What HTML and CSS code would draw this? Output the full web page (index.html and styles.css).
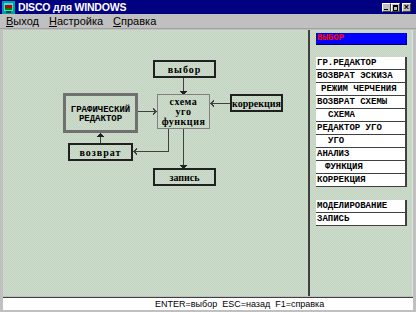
FILE: index.html
```html
<!DOCTYPE html>
<html lang="ru">
  <head>
    <meta charset="UTF-8" />
    <title>DISCO для WINDOWS</title>
    <link rel="stylesheet" href="styles.css">
  </head>
  <body>
    <div class="window">
      <div class="titlebar">
        <svg class="app-icon" viewBox="0 0 13 13" shape-rendering="crispEdges">
          <rect x="0" y="0" width="13" height="13" fill="#00a0a0" />
          <rect x="2" y="2" width="9" height="8" fill="#40e0e0" />
          <rect x="3" y="4" width="7" height="3" fill="#c00000" />
          <rect x="3" y="7" width="7" height="2" fill="#008000" />
          <rect x="4" y="10" width="5" height="2" fill="#004040" />
        </svg>
        <span class="title">DISCO для WINDOWS</span>
        <div class="controls">
          <span class="ctl ctl-min"></span>
          <span class="ctl ctl-max"></span>
          <span class="ctl ctl-close">×</span>
        </div>
      </div>

      <div class="menubar">
        <span class="menu-item"><u>В</u>ыход</span>
        <span class="menu-item"><u>Н</u>астройка</span>
        <span class="menu-item"><u>С</u>правка</span>
      </div>

      <div class="main">
        <div class="canvas">
          <svg class="links" width="305" height="267" shape-rendering="crispEdges">
            <g stroke="#404040" fill="none" stroke-width="1">
              <path d="M180.5 48 V62" />
              <path d="M135 81.5 H153" />
              <path d="M150 78.5 L153 81.5 L150 84.5" />
              <path d="M227 73.5 H208" />
              <path d="M211 70.5 L208 73.5 L211 76.5" />
              <path d="M180.5 99 V136" />
              <path d="M165.5 99 V121.5 H131" />
              <path d="M134 118.5 L131 121.5 L134 124.5" />
              <path d="M97.5 113 V105" />
            </g>
            <g fill="#202020">
              <path d="M177 61 H184 L180.5 65 Z" />
              <path d="M177 135 H184 L180.5 139 Z" />
              <path d="M94 107 H101 L97.5 103 Z" />
            </g>
          </svg>

          <div class="node node-dark node-select">выбор</div>
          <div class="node node-thin node-scheme">схема<br>уго<br>функция</div>
          <div class="node node-dark node-fix">коррекция</div>
          <div class="node node-dark node-save">запись</div>
          <div class="node node-grey node-editor">ГРАФИЧЕСКИЙ<br>РЕДАКТОР</div>
          <div class="node node-dark node-back">возврат</div>
        </div>

        <div class="sidebar">
          <div class="choice">ВЫБОР</div>
          <ul class="actions">
            <li>ГР.РЕДАКТОР</li>
            <li>ВОЗВРАТ ЭСКИЗА</li>
            <li class="indent-1">РЕЖИМ ЧЕРЧЕНИЯ</li>
            <li>ВОЗВРАТ СХЕМЫ</li>
            <li class="indent-3">СХЕМА</li>
            <li>РЕДАКТОР УГО</li>
            <li class="indent-3">УГО</li>
            <li>АНАЛИЗ</li>
            <li class="indent-2">ФУНКЦИЯ</li>
            <li>КОРРЕКЦИЯ</li>
            <li class="spacer"></li>
            <li>МОДЕЛИРОВАНИЕ</li>
            <li>ЗАПИСЬ</li>
          </ul>
        </div>
      </div>

      <div class="statusbar">ENTER=выбор&nbsp;&nbsp;ESC=назад&nbsp;&nbsp;F1=справка</div>
    </div>
  </body>
</html>
```

FILE: styles.css
```css
body {
  margin: 0;
  background-color: #c0c0c0;
}

.window {
  width: 416px;
  height: 312px;
  background-color: #c0c0c0;
  display: flex;
  flex-direction: column;
  overflow: hidden;
}

.titlebar {
  height: 14px;
  background-color: #000080;
  display: flex;
  align-items: center;
  padding-left: 2px;
}

.app-icon {
  width: 13px;
  height: 13px;
}

.title {
  margin-left: 3px;
  color: #fff;
  font-family: "Liberation Sans", sans-serif;
  font-weight: bold;
  font-size: 10.5px;
  letter-spacing: -0.2px;
}

.controls {
  margin-left: auto;
  margin-right: 5px;
  display: flex;
}

.ctl {
  width: 9px;
  height: 9px;
  box-sizing: border-box;
  background-color: #c0c0c0;
  border: 1px solid;
  border-color: #fff #404040 #404040 #fff;
  position: relative;
  font-family: "Liberation Sans", sans-serif;
  font-weight: bold;
  font-size: 9px;
  line-height: 7px;
  text-align: center;
  color: #000;
}

.ctl-min::after {
  content: "";
  position: absolute;
  left: 1px;
  bottom: 1px;
  width: 4px;
  height: 1px;
  background-color: #000;
}

.ctl-max::after {
  content: "";
  position: absolute;
  left: 1px;
  top: 1px;
  width: 3px;
  height: 3px;
  border: 1px solid #000;
  border-top-width: 2px;
}

.ctl-close {
  margin-left: 2px;
}

.menubar {
  height: 14px;
  display: flex;
  align-items: center;
  padding-left: 6px;
  gap: 10px;
  font-family: "Liberation Sans", sans-serif;
  font-size: 11px;
  color: #000;
}

.main {
  height: 268px;
  display: flex;
  padding: 1px 3px 0 3px;
  box-sizing: border-box;
  border-top: 1px solid #a0a0a0;
}

.canvas,
.sidebar {
  background-color: #c8d8c6;
  background-image: repeating-conic-gradient(#bad8be 0 25%, #d6d8d0 0 50%);
  background-size: 2px 2px;
}

.canvas {
  position: relative;
  width: 305px;
  border-right: 2px solid #404040;
}

.links {
  position: absolute;
  left: 0;
  top: 0;
}

.node {
  position: absolute;
  box-sizing: border-box;
  display: flex;
  align-items: center;
  justify-content: center;
  text-align: center;
  font-family: "Liberation Serif", serif;
  font-weight: bold;
  font-size: 10px;
  color: #000;
}

.node-dark {
  border: 2px solid #202020;
  height: 18px;
}

.node-thin {
  border: 1px solid #808080;
  line-height: 10px;
  letter-spacing: 0.5px;
}

.node-grey {
  border: 3px solid #707070;
  font-family: "Liberation Mono", monospace;
  font-size: 9px;
  line-height: 9px;
  padding-top: 3px;
}

.node-select {
  left: 150px;
  top: 30px;
  width: 63px;
  letter-spacing: 1px;
}

.node-scheme {
  left: 154px;
  top: 64px;
  width: 53px;
  height: 35px;
}

.node-fix {
  left: 227px;
  top: 64px;
  width: 53px;
}

.node-save {
  left: 150px;
  top: 138px;
  width: 63px;
}

.node-editor {
  left: 60px;
  top: 63px;
  width: 75px;
  height: 40px;
}

.node-back {
  left: 65px;
  top: 113px;
  width: 65px;
  letter-spacing: 1px;
}

.sidebar {
  flex: 1;
  padding: 3px 0 0 6px;
  border-right: 1px solid #e0e0e0;
}

.choice {
  width: 91px;
  height: 12px;
  box-sizing: border-box;
  background-color: #0000ff;
  color: #ff0000;
  border-right: 1px solid #000060;
  border-bottom: 1px solid #000060;
  padding-left: 1px;
  font-family: "Liberation Mono", monospace;
  font-weight: bold;
  font-size: 9px;
  line-height: 11px;
}

.actions {
  list-style: none;
  margin: 12px 0 0 0;
  padding: 0;
  width: 91px;
}

.actions li {
  height: 13px;
  box-sizing: border-box;
  background-color: #fff;
  border-right: 2px solid #404040;
  border-bottom: 1px solid #404040;
  padding-left: 1px;
  font-family: "Liberation Mono", monospace;
  font-weight: bold;
  font-size: 9px;
  line-height: 12px;
  color: #000;
  white-space: nowrap;
  overflow: hidden;
}

.actions li.indent-1 {
  padding-left: 5px;
}

.actions li.indent-2 {
  padding-left: 9px;
}

.actions li.indent-3 {
  padding-left: 12px;
}

.actions li.spacer {
  background: none;
  border: none;
}

.statusbar {
  margin: 1px 3px 0 3px;
  height: 13px;
  box-sizing: border-box;
  background-color: #fff;
  border-top: 1px solid #404040;
  padding-left: 152px;
  font-family: "Liberation Sans", sans-serif;
  font-size: 9px;
  line-height: 12px;
  color: #000;
}
```
